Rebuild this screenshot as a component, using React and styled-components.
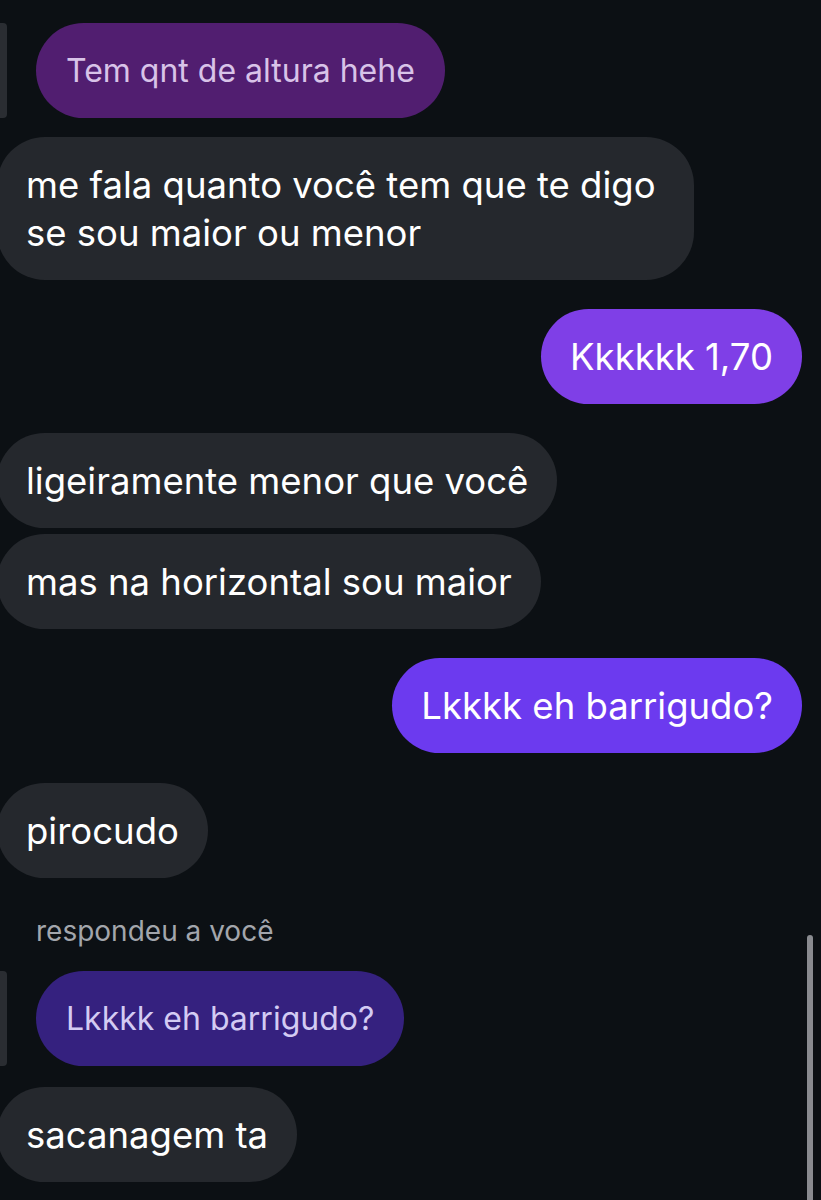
import styled, { createGlobalStyle } from "styled-components";

const GlobalStyle = createGlobalStyle`
  html, body {
    margin: 0;
    padding: 0;
    background: #0c1014;
  }
  body {
    font-family: Inter, "Noto Sans", sans-serif;
    -webkit-font-smoothing: antialiased;
  }
`;

const messages = [
  { type: "quote", text: "Tem qnt de altura hehe", tone: "plum" },
  { type: "in", text: "me fala quanto você tem que te digo\nse sou maior ou menor", gap: 19, wide: true },
  { type: "out", text: "Kkkkkk 1,70", color: "#7f3fe7", gap: 29 },
  { type: "in", text: "ligeiramente menor que você", gap: 29 },
  { type: "in", text: "mas na horizontal sou maior", gap: 6 },
  { type: "out", text: "Lkkkk eh barrigudo?", color: "#6c3aef", gap: 29 },
  { type: "in", text: "pirocudo", gap: 30 },
  { type: "label", text: "respondeu a você", gap: 37 },
  { type: "quote", text: "Lkkkk eh barrigudo?", tone: "indigo", gap: 24 },
  { type: "in", text: "sacanagem ta", gap: 21 },
];

const quoteTones = {
  plum: { bg: "#511e70", fg: "#d8c3e8" },
  indigo: { bg: "#35217f", fg: "#d3cbf3" },
};

const App = () => {
  return (
    <>
      <GlobalStyle />
      <Thread>
        {messages.map((m, i) => {
          if (m.type === "label") {
            return (
              <ReplyLabel key={i} $gap={m.gap}>
                {m.text}
              </ReplyLabel>
            );
          }
          if (m.type === "quote") {
            const tone = quoteTones[m.tone];
            return (
              <QuoteRow key={i} $gap={m.gap}>
                <QuoteBar />
                <QuoteBubble $bg={tone.bg} $fg={tone.fg}>
                  {m.text}
                </QuoteBubble>
              </QuoteRow>
            );
          }
          if (m.type === "out") {
            return (
              <OutRow key={i} $gap={m.gap}>
                <Bubble $bg={m.color}>{m.text}</Bubble>
              </OutRow>
            );
          }
          return (
            <InRow key={i} $gap={m.gap}>
              <Bubble $bg="#25282d" $in $wide={m.wide}>
                {m.text}
              </Bubble>
            </InRow>
          );
        })}
        <Scrollbar />
      </Thread>
    </>
  );
};

const Thread = styled.div`
  position: relative;
  width: 821px;
  height: 1200px;
  overflow: hidden;
  box-sizing: border-box;
  padding-top: 23px;
  display: flex;
  flex-direction: column;
  background: #0c1014;
`;

const Row = styled.div`
  display: flex;
  margin-top: ${(p) => p.$gap || 0}px;
`;

const InRow = styled(Row)`
  justify-content: flex-start;
`;

const OutRow = styled(Row)`
  justify-content: flex-end;
  padding-right: 19px;
`;

const Bubble = styled.div`
  background: ${(p) => p.$bg};
  color: #fff;
  font-size: 36.5px;
  line-height: 48px;
  padding: 23.5px ${(p) => (p.$wide ? "38px" : "29px")} 23.5px 29px;
  border-radius: 48px;
  white-space: pre-line;
  margin-left: ${(p) => (p.$in ? "-3px" : "0")};
`;

const QuoteRow = styled(Row)`
  align-items: stretch;
  gap: 29px;
`;

const QuoteBar = styled.div`
  width: 7px;
  border-radius: 0 4px 4px 0;
  background: #2a2d32;
`;

const QuoteBubble = styled.div`
  background: ${(p) => p.$bg};
  color: ${(p) => p.$fg};
  font-size: 32px;
  line-height: 47px;
  padding: 24px 30px;
  border-radius: 48px;
`;

const ReplyLabel = styled.div`
  margin-top: ${(p) => p.$gap}px;
  padding-left: 36px;
  font-size: 28px;
  line-height: 32px;
  color: #a3a6ac;
`;

const Scrollbar = styled.div`
  position: absolute;
  right: 8px;
  top: 935px;
  bottom: 0;
  width: 6px;
  border-radius: 3px 3px 0 0;
  background: #8a8b90;
`;

export default App;
